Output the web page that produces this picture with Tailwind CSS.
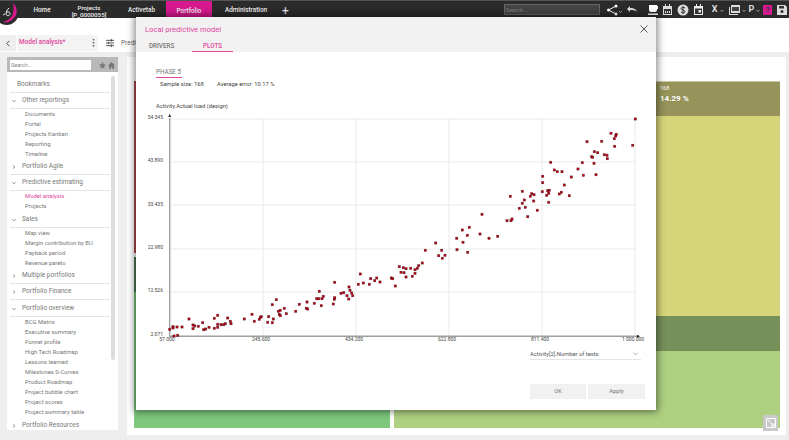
<!DOCTYPE html>
<html lang="en">
<head>
  <meta charset="UTF-8">
  <title>Model analysis</title>
  <script src="https://cdn.jsdelivr.net/npm/@tailwindcss/browser@4"></script>
</head>
<body class="relative w-[789px] h-[440px] overflow-hidden bg-[#eeeeee] font-['Roboto',sans-serif]">

  <!-- Top bar -->
  <header class="relative z-10 flex items-center h-[18px] bg-[#2b2b2b] border-t border-[#555] text-[#eeeeee] text-[6.400px] font-medium">
    <div class="w-[26px]"></div>
    <a class="w-[32px] text-center mt-[3px]">Home</a>
    <a class="w-[62px] text-center leading-[7px] mt-[5px] text-[6.200px]">Projects<br>[P_0000055]</a>
    <a class="w-[43px] text-center mt-[3px]">Activetab</a>
    <a class="flex items-center justify-center w-[46px] h-[18px] bg-[#d6198f] ml-[3px]"><span class="mt-[5px]">Portfolio</span></a>
    <a class="w-[68px] text-center mt-[3px]">Administration</a>
    <span class="ml-[2px] mt-[3px] text-[12px] font-normal leading-none">+</span>
    <input placeholder="Search..." class="ml-[215px] w-[96px] h-[11px] px-[1px] bg-[#444] border border-[#666] text-[5.500px] placeholder:text-[#777]">
    <div class="flex items-center gap-[2px] ml-[7px]">
      <svg class="w-[17px] h-[12px]" viewBox="0 0 17 12" fill="none"><circle cx="1.500" cy="6" r="1.500" fill="#fff"/><circle cx="9" cy="2" r="1.500" fill="#fff"/><circle cx="9" cy="10" r="1.500" fill="#fff"/><path d="M9 2 1.500 6 9 10" stroke="#fff"/><path d="M12 7l1.500 1.500L15 7" stroke="#ccc" stroke-width=".7"/></svg>
      <svg class="w-[12px] h-[12px]" viewBox="0 0 12 12" fill="none"><path d="M1 5l3-3v2c4 0 6 1 7 4-2-2-4-2-7-2v2z" fill="#ddd"/></svg>
      <svg class="w-[12px] h-[12px] ml-[7px]" viewBox="0 0 12 12"><path d="M2 1h8v1h1v3h-1v1a2 2 0 0 1-2 2H4a2 2 0 0 1-2-2zM1 9.500h10V11H1z" fill="#fff"/></svg>
      <svg class="w-[11px] h-[12px] ml-[1px]" viewBox="0 0 11 12"><path d="M1 2h9v9H1z" fill="#ddd"/><path d="M2 5h7v5H2z" fill="#333"/><path d="M3 0h1v3H3zM7 0h1v3H7z" fill="#ddd"/><path d="M3 7h1v2H3zM5 7h1v2H5zM7 7h1v2H7z" fill="#ddd"/></svg>
      <svg class="w-[12px] h-[12px] ml-[2px]" viewBox="0 0 12 12"><circle cx="6" cy="6" r="5.500" fill="#ddd"/><path d="M8 4c-1-1-4-1-4 .6S8 6 8 7.600 5 9 4 8M6 2v8" stroke="#333" fill="none"/></svg>
      <svg class="w-[11px] h-[12px] ml-[2px]" viewBox="0 0 11 12"><path d="M1 2h9v9H1z" fill="#eee"/><path d="M2 4.500h7V10H2z" fill="#333"/><path d="M5.500 6H8v2.500H5.500zM3 0h1v3H3zM7 0h1v3H7z" fill="#eee"/></svg>
      <span class="ml-[6px] text-[9px] font-bold leading-none text-[#ddd]">X</span>
      <svg class="w-[4px] h-[4px] mt-[3px]" viewBox="0 0 4 4" fill="none"><path d="M.5 1 2 2.500 3.500 1" stroke="#ccc" stroke-width=".7"/></svg>
      <svg class="w-[12px] h-[12px] ml-[2px]" viewBox="0 0 12 12"><path d="M3 1h9v8H3z" fill="#ddd"/><path d="M1 3v8h9v-1H2V3z" fill="#ddd"/><path d="M4 3h7v4H4z" fill="#444"/></svg>
      <svg class="w-[4px] h-[4px] mt-[3px]" viewBox="0 0 4 4" fill="none"><path d="M.5 1 2 2.500 3.500 1" stroke="#ccc" stroke-width=".7"/></svg>
      <span class="ml-[1px] text-[9px] font-bold leading-none text-[#ddd]">P</span>
      <svg class="w-[4px] h-[4px] mt-[3px]" viewBox="0 0 4 4" fill="none"><path d="M.5 1 2 2.500 3.500 1" stroke="#ccc" stroke-width=".7"/></svg>
      <span class="flex items-center justify-center w-[9px] h-[10px] ml-[1px] bg-[#d6198f] rounded-[1px] text-[8px] font-bold leading-none text-[#333]">?</span>
      <svg class="w-[10px] h-[10px] ml-[3px]" viewBox="0 0 10 10"><path d="M0 0h8l2 2v8H0z" fill="#ddd"/><path d="M2 1h5v2.500H2z" fill="#333"/><circle cx="5" cy="6.500" r="1.500" fill="#333"/></svg>
    </div>
  </header>

  <!-- Logo -->
  <svg class="absolute z-20 left-0 top-0 w-[20px] h-[26px]" viewBox="0 0 20 26" fill="none">
    <circle cx="6.500" cy="13" r="12" fill="#2b2b2b"/>
    <path d="M13 3c5 5 5 12 0 16-3 3-7 4-10 3 4-1 7-3 9-6 2-4 2-9 1-13z" fill="#d6198f"/>
    <path d="M9 8c-2 2-3 4-3 6a2 2 0 1 0 3-2 2.500 2.500 0 0 0-3 1M5 14l-2 1" stroke="#fff" stroke-width=".9"/>
  </svg>

  <!-- Sub header -->
  <div class="h-[34px] bg-white pt-[17px] flex items-start">
    <div class="flex items-center justify-center w-[16px] h-[16px] bg-[#eeeeee]">
      <svg class="w-[6px] h-[7px]" viewBox="0 0 6 8" fill="none"><path d="M4.500 1 1.500 4l3 3" stroke="#444" stroke-width="1.100"/></svg>
    </div>
    <div class="flex items-center justify-between w-[81px] h-[16px] ml-[1px] bg-[#f3f3f3] pl-[2px] pr-[3px] text-[6.500px] text-[#e0479f] font-medium">
      <span>Model analysis*</span>
      <svg class="w-[3px] h-[8px]" viewBox="0 0 3 8"><path d="M.8 0h1.400v1.400H.8zM.8 3h1.400v1.400H.8zM.8 6h1.400v1.400H.8z" fill="#555"/></svg>
    </div>
    <svg class="w-[8px] h-[8px] ml-[8px] mt-[4px]" viewBox="0 0 9 9" fill="none" stroke="#444"><path d="M0 1.500h9M0 4.500h9M0 7.500h9"/><path d="M6 0v3M3 3v3M6 6v3"/></svg>
    <span class="ml-[7px] mt-[4px] text-[6.500px] text-[#666]">Predic</span>
  </div>

  <!-- Workspace -->
  <div class="flex h-[388px] pl-[7px] pt-[5px]">

    <!-- Sidebar -->
    <aside class="w-[111px] h-[373px] bg-white overflow-hidden text-[5.900px] text-[#777]">
      <div class="flex items-center h-[15px] bg-[#b9b9b9] px-[3px] pt-[1px]">
        <input placeholder="Search..." class="w-[81px] h-[10px] px-[1px] bg-white text-[5.500px] placeholder:text-[#888]">
        <svg class="w-[7px] h-[7px] ml-[8px]" viewBox="0 0 10 10"><path d="M5 0l1.500 3.300 3.500.4-2.600 2.400.7 3.600L5 8l-3.100 1.700.7-3.600L0 3.700l3.500-.4z" fill="#777"/></svg>
        <svg class="w-[7px] h-[7px] ml-[2px]" viewBox="0 0 10 10"><path d="M5 0 0 5h1.500v5h2.500V7h2v3h2.500V5H10z" fill="#777"/></svg>
      </div>
      <div class="relative pl-[3px] pr-[8px] pt-[4.500px]">
        <div class="absolute right-[3px] top-[4px] w-[4px] h-[284px] rounded-full bg-[#dddddd]"></div>

        <div class="flex items-center h-[16px] pt-[2px] border-b border-[#e4e4e4] pl-[7px] text-[6.500px]">Bookmarks</div>

        <div class="flex items-center gap-[6px] h-[16px] pt-[2px] border-b border-[#e4e4e4] pl-[2px] text-[6.500px]"><svg class="w-[4px] h-[4px]" viewBox="0 0 6 6" fill="none"><path d="M.5 1.500 3 4.500l2.500-3" stroke="#777"/></svg>Other reportings</div>
        <ul class="pl-[15px] leading-[10px]">
          <li>Documents</li>
          <li>Portal</li>
          <li>Projects Kanban</li>
          <li>Reporting</li>
          <li>Timeline</li>
        </ul>
        <div class="flex items-center gap-[6px] h-[16px] pt-[2px] border-b border-[#e4e4e4] pl-[2px] text-[6.500px]"><svg class="w-[4px] h-[4px]" viewBox="0 0 6 6" fill="none"><path d="M1.500.5l3 2.500-3 2.500" stroke="#777"/></svg>Portfolio Agile</div>
        <div class="flex items-center gap-[6px] h-[16px] pt-[2px] border-b border-[#e4e4e4] pl-[2px] text-[6.500px]"><svg class="w-[4px] h-[4px]" viewBox="0 0 6 6" fill="none"><path d="M.5 1.500 3 4.500l2.500-3" stroke="#777"/></svg>Predictive estimating</div>
        <ul class="pl-[15px] leading-[10px]">
          <li class="text-[#e0479f]">Model analysis</li>
          <li>Projects</li>
        </ul>
        <div class="flex items-center gap-[6px] h-[17px] pt-[2px] border-b border-[#e4e4e4] pl-[2px] text-[6.500px]"><svg class="w-[4px] h-[4px]" viewBox="0 0 6 6" fill="none"><path d="M.5 1.500 3 4.500l2.500-3" stroke="#777"/></svg>Sales</div>
        <ul class="pl-[15px] leading-[10px]">
          <li>Map view</li>
          <li>Margin contribution by BU</li>
          <li>Payback period</li>
          <li>Revenue pareto</li>
        </ul>
        <div class="flex items-center gap-[6px] h-[16px] pt-[2px] border-b border-[#e4e4e4] pl-[2px] text-[6.500px]"><svg class="w-[4px] h-[4px]" viewBox="0 0 6 6" fill="none"><path d="M1.500.5l3 2.500-3 2.500" stroke="#777"/></svg>Multiple portfolios</div>
        <div class="flex items-center gap-[6px] h-[16px] pt-[2px] border-b border-[#e4e4e4] pl-[2px] text-[6.500px]"><svg class="w-[4px] h-[4px]" viewBox="0 0 6 6" fill="none"><path d="M1.500.5l3 2.500-3 2.500" stroke="#777"/></svg>Portfolio Finance</div>
        <div class="flex items-center gap-[6px] h-[17px] pt-[2px] border-b border-[#e4e4e4] pl-[2px] text-[6.500px]"><svg class="w-[4px] h-[4px]" viewBox="0 0 6 6" fill="none"><path d="M.5 1.500 3 4.500l2.500-3" stroke="#777"/></svg>Portfolio overview</div>
        <ul class="pl-[15px] leading-[10px]">
          <li>BCG Matrix</li>
          <li>Executive summary</li>
          <li>Funnel profile</li>
          <li>High Tech Roadmap</li>
          <li>Lessons learned</li>
          <li>Milestones S-Curves</li>
          <li>Product Roadmap</li>
          <li>Project bubble chart</li>
          <li>Project scores</li>
          <li>Project summary table</li>
        </ul>
        <div class="flex items-center gap-[6px] h-[16px] pt-[2px] pl-[2px] text-[6.500px]"><svg class="w-[4px] h-[4px]" viewBox="0 0 6 6" fill="none"><path d="M1.500.5l3 2.500-3 2.500" stroke="#777"/></svg>Portfolio Resources</div>
      </div>
    </aside>

    <!-- Treemap panel -->
    <main class="w-[659px] h-[378px] ml-[9px] bg-white pl-[7px] pr-[6px] pt-[24px]">
      <div class="flex gap-[4px] h-[347px]">
        <div class="flex flex-col w-[256px]">
          <div class="h-[172px] bg-[#b04a50]"></div>
          <div class="h-[4px] bg-white"></div>
          <div class="h-[35px] bg-[#4f7d5a]"></div>
          <div class="flex-1 bg-[#7dc87d]"></div>
        </div>
        <div class="flex flex-col flex-1 relative">
          <div class="flex flex-col justify-start items-end h-[35px] bg-[#96945a] border-t border-[#c9c8a0] text-white">
            <div class="w-[122px] pl-[2px] pt-[3px]">
              <div class="text-[5.500px] leading-[7px]">168</div>
              <div class="text-[8px] font-bold leading-[13px]">14.29 %</div>
            </div>
          </div>
          <div class="h-[200px] bg-[#d6d57a]"></div>
          <div class="h-[35px] bg-[#76905a]"></div>
          <div class="flex-1 bg-[#aed081]"></div>
          <div class="absolute right-[2px] bottom-[-3px] flex items-center justify-center w-[15px] h-[16px] bg-[#c9c9c9]">
            <svg class="w-[10px] h-[10px]" viewBox="0 0 10 10" fill="none" stroke="#fff"><path d="M.5.500h9v9h-9zM2 2l6 6M8 5v3H5"/></svg>
          </div>
        </div>
      </div>
    </main>
  </div>

  <!-- Modal -->
  <section class="absolute z-30 left-[136px] top-[17px] w-[520px] h-[393px] bg-white shadow-[0_0_7px_2px_rgba(0,0,0,0.45)]">
    <div class="relative h-[35px] bg-[#f1f1f1]">
      <h2 class="pl-[9px] pt-[7px] text-[7.600px] leading-[11px] text-[#e0479f]">Local predictive model</h2>
      <svg class="absolute right-[8px] top-[8px] w-[8px] h-[8px]" viewBox="0 0 8 8" fill="none" stroke="#555"><path d="M.5.500l7 7M7.500.500l-7 7"/></svg>
      <div class="absolute left-0 bottom-0 flex text-[6.300px] font-medium leading-[11px]">
        <a class="w-[56px] h-[11px] pl-[13px] text-[#777]">DRIVERS</a>
        <a class="w-[41px] h-[11px] text-center text-[#e0479f] border-b border-[#e0479f]">PLOTS</a>
      </div>
    </div>
    <div class="pl-[20px] pt-[15px] text-[5.800px] leading-[10px] text-[#555]">
      <div class="inline-block border-b border-[#e0479f] leading-[9px] pr-[1px] text-[6.300px] text-[#777]">PHASE 5</div>
      <div class="flex pl-[4px] pt-[1px] text-[#444]">
        <span class="w-[57px]">Sample size: 168</span>
        <span>Average error: 10.17 %</span>
      </div>
      <div class="mt-[12px] text-[#444]">Activity.Actual load (design)</div>
    </div>

    <!-- Scatter plot; coordinates are relative to the modal -->
    <svg id="plot" class="absolute left-0 top-0 w-[520px] h-[393px] pointer-events-none" viewBox="0 0 520 393" fill="none">
      <g stroke="#e6e6e6" stroke-width="0.8">
        <path d="M34 102H499M34 145H499M34 188H499M34 232H499M34 275H499"/>
        <path d="M127 102V319M220 102V319M313 102V319M406 102V319M499 102V319"/>
      </g>
      <path d="M33.700 101V319.300H503" stroke="#a0a0a0" stroke-width="1.400"/>
      <path d="M33.700 97l-1.500 3h3zM504 319.300l-3-1.500v3z" fill="#222"/>
      <g id="pts"></g>
      <g font-family="Roboto, sans-serif" font-size="5" fill="#444" stroke="none">
        <g text-anchor="end">
          <text x="27" y="101.700">54.345</text>
          <text x="27" y="145">43.890</text>
          <text x="27" y="188.700">33.435</text>
          <text x="27" y="231.700">22.980</text>
          <text x="27" y="275.400">12.526</text>
          <text x="27" y="319">2.071</text>
        </g>
        <g text-anchor="middle">
          <text x="31" y="323.500">57.000</text>
          <text x="125" y="323.500">245.600</text>
          <text x="218" y="323.500">434.200</text>
          <text x="311" y="323.500">622.800</text>
          <text x="404" y="323.500">811.400</text>
          <text x="497" y="323.500">1 000.000</text>
        </g>
      </g>
    </svg>

    <div class="absolute left-[394px] top-[332px] flex items-center justify-between w-[111px] h-[11px] border-b border-[#e4e4e4] text-[5.800px] text-[#555]">
      <span>Activity[2].Number of tests</span>
      <svg class="w-[5px] h-[4px] mr-[3px]" viewBox="0 0 6 4" fill="none"><path d="M.5.500 3 3 5.500.500" stroke="#777" stroke-width=".8"/></svg>
    </div>
    <div class="absolute left-[394px] top-[367px] flex gap-[2px] text-[5.800px] text-[#777]">
      <button class="w-[56px] h-[15px] bg-[#f1f1f1]">OK</button>
      <button class="w-[57px] h-[15px] bg-[#f1f1f1]">Apply</button>
    </div>
  </section>

  <script>
    // points read off the chart, grouped by the plot area they fall in
    const groups = [
      { ox: 0, oy: 213, pts: [[101,298],[111,290],[111,294],[123,291],[138,291],[114,318],[125,316],[159,267],[171,285],[171,296],[176,288],[187,289],[200,278],[203,299],[209,297],[219,292],[235,265],[235,295],[245,256],[245,283],[245,292],[255,284],[263,284],[268,281],[275,264],[283,274],[285,281],[325,267],[348,253],[355,274],[370,268],[373,262],[376,260],[395,277],[398,260],[409,224],[409,278],[412,267],[421,209],[427,244],[430,253],[433,241],[433,257],[445,235],[451,251],[479,244],[490,223],[511,235],[513,216],[515,237],[535,220],[542,206],[548,206],[550,184],[556,227],[558,206],[562,199],[592,222],[595,208],[596,203],[596,157],[615,190],[623,188],[633,197],[638,207],[639,171],[642,181],[647,189],[650,197],[667,163],[673,132],[682,159],[700,163],[704,146],[716,152],[722,144],[732,156],[766,144],[770,146],[778,168]] },
      { ox: 260, oy: 213, pts: [[10,110],[15,127],[22,113],[24,128],[30,116],[30,141],[44,115],[49,139],[57,119],[57,130],[64,115],[68,107],[79,99],[88,61],[119,39],[128,77],[137,61],[139,85],[147,76],[182,25],[183,59],[201,37],[214,16],[215,67],[252,12],[279,25],[305,19]] },
      { ox: 260, oy: 83, pts: [[199,390],[220,382],[258,343],[333,362],[345,362],[348,357],[343,289],[370,325],[379,310],[379,274],[385,300],[388,322],[395,350],[403,289],[407,281],[414,284],[413,303],[424,331],[439,275],[440,248],[440,229],[452,286],[455,272],[458,280],[460,271],[458,307],[464,187],[475,210],[484,215],[490,282],[496,277],[498,215],[505,255],[520,287],[526,231],[546,207],[559,188],[562,226],[573,125],[587,170],[590,172],[594,190],[595,155],[600,224],[605,158],[617,124],[625,164],[633,166],[634,176],[645,100],[656,139],[655,116],[659,108],[661,103],[710,136],[718,57]] }
    ];
    const layer = document.getElementById('pts');
    groups.forEach(g => g.pts.forEach(p => {
      const r = document.createElementNS('http://www.w3.org/2000/svg', 'rect');
      r.setAttribute('x', p[0] / 3 + g.ox - 1.2);
      r.setAttribute('y', p[1] / 3 + g.oy - 1.2);
      r.setAttribute('width', 2.4);
      r.setAttribute('height', 2.4);
      r.setAttribute('fill', '#b00014');
      r.setAttribute('stroke', '#000');
      r.setAttribute('stroke-opacity', 0.4);
      r.setAttribute('stroke-width', 0.5);
      layer.appendChild(r);
    }));
  </script>
</body>
</html>
